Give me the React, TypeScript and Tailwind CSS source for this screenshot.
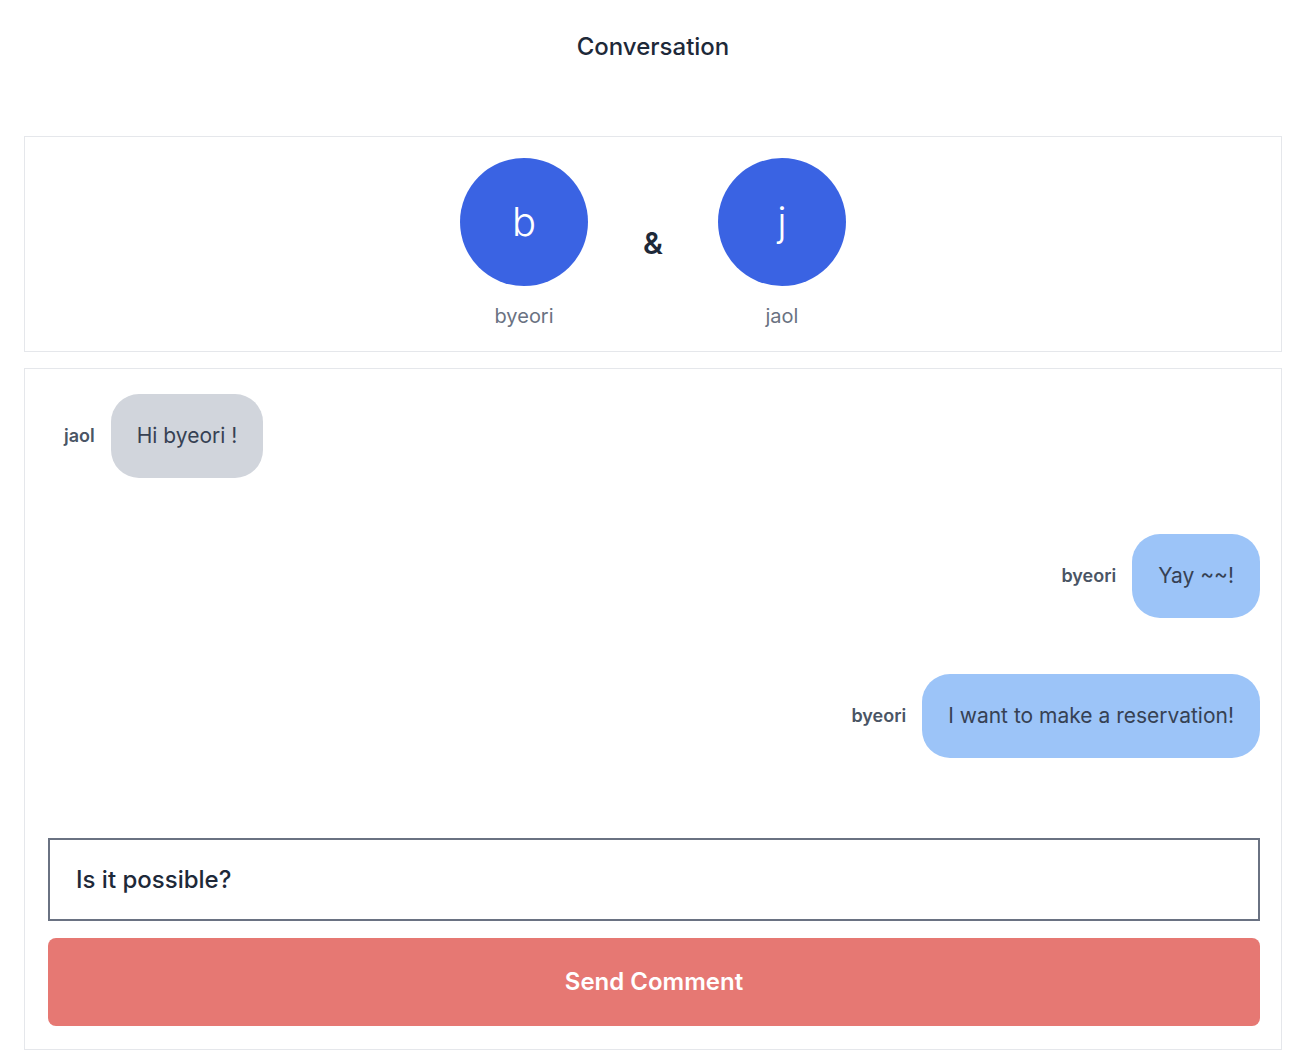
import React from "react"

type Message = {
  author: string
  text: string
  mine: boolean
}

const messages: Message[] = [
  { author: "jaol", text: "Hi byeori !", mine: false },
  { author: "byeori", text: "Yay ~~!", mine: true },
  { author: "byeori", text: "I want to make a reservation!", mine: true },
]

function Avatar({ name }: { name: string }) {
  return (
    <div className="flex flex-col items-center">
      <div className="w-32 h-32 rounded-full bg-[#3a63e3] flex items-center justify-center text-white text-[40px] font-light leading-none">
        {name[0]}
      </div>
      <span className="mt-4 text-xl text-gray-500">{name}</span>
    </div>
  )
}

function Bubble({ msg }: { msg: Message }) {
  return (
    <div className={`flex items-center mb-14 ${msg.mine ? "justify-end" : "justify-start"}`}>
      <span className="text-lg font-semibold text-gray-600 mr-4 ml-4">{msg.author}</span>
      <div
        className={`rounded-[28px] px-[26px] py-7 text-[21px] leading-7 text-gray-700 ${
          msg.mine ? "bg-[#9cc4f8]" : "bg-gray-300"
        }`}
      >
        {msg.text}
      </div>
    </div>
  )
}

export default function App() {
  return (
    <div className="min-h-screen bg-white pl-6 pr-[30px] pb-[3px]" style={{ fontFamily: "Inter, 'Noto Sans', sans-serif" }}>
      <h1 className="pt-[31px] h-[136px] text-center text-2xl font-medium text-gray-800">Conversation</h1>

      <div className="border border-gray-200 pt-[21px] pb-[21px] flex justify-center items-start">
        <Avatar name="byeori" />
        <span className="mx-[55px] mt-[67px] text-3xl font-semibold text-gray-800">&amp;</span>
        <Avatar name="jaol" />
      </div>

      <div className="mt-4 border border-gray-200 pl-[23px] pr-[21px] pt-[25px] pb-[23px]">
        {messages.map((m, i) => (
          <Bubble key={i} msg={m} />
        ))}
        <div className="mt-20 h-[83px] border-2 border-gray-500 flex items-center px-[26px]">
          <span className="text-2xl font-medium text-gray-800">Is it possible?</span>
        </div>
        <button className="mt-[17px] w-full h-[88px] rounded-lg bg-[#e67873] text-white text-2xl font-semibold">
          Send Comment
        </button>
      </div>
    </div>
  )
}
